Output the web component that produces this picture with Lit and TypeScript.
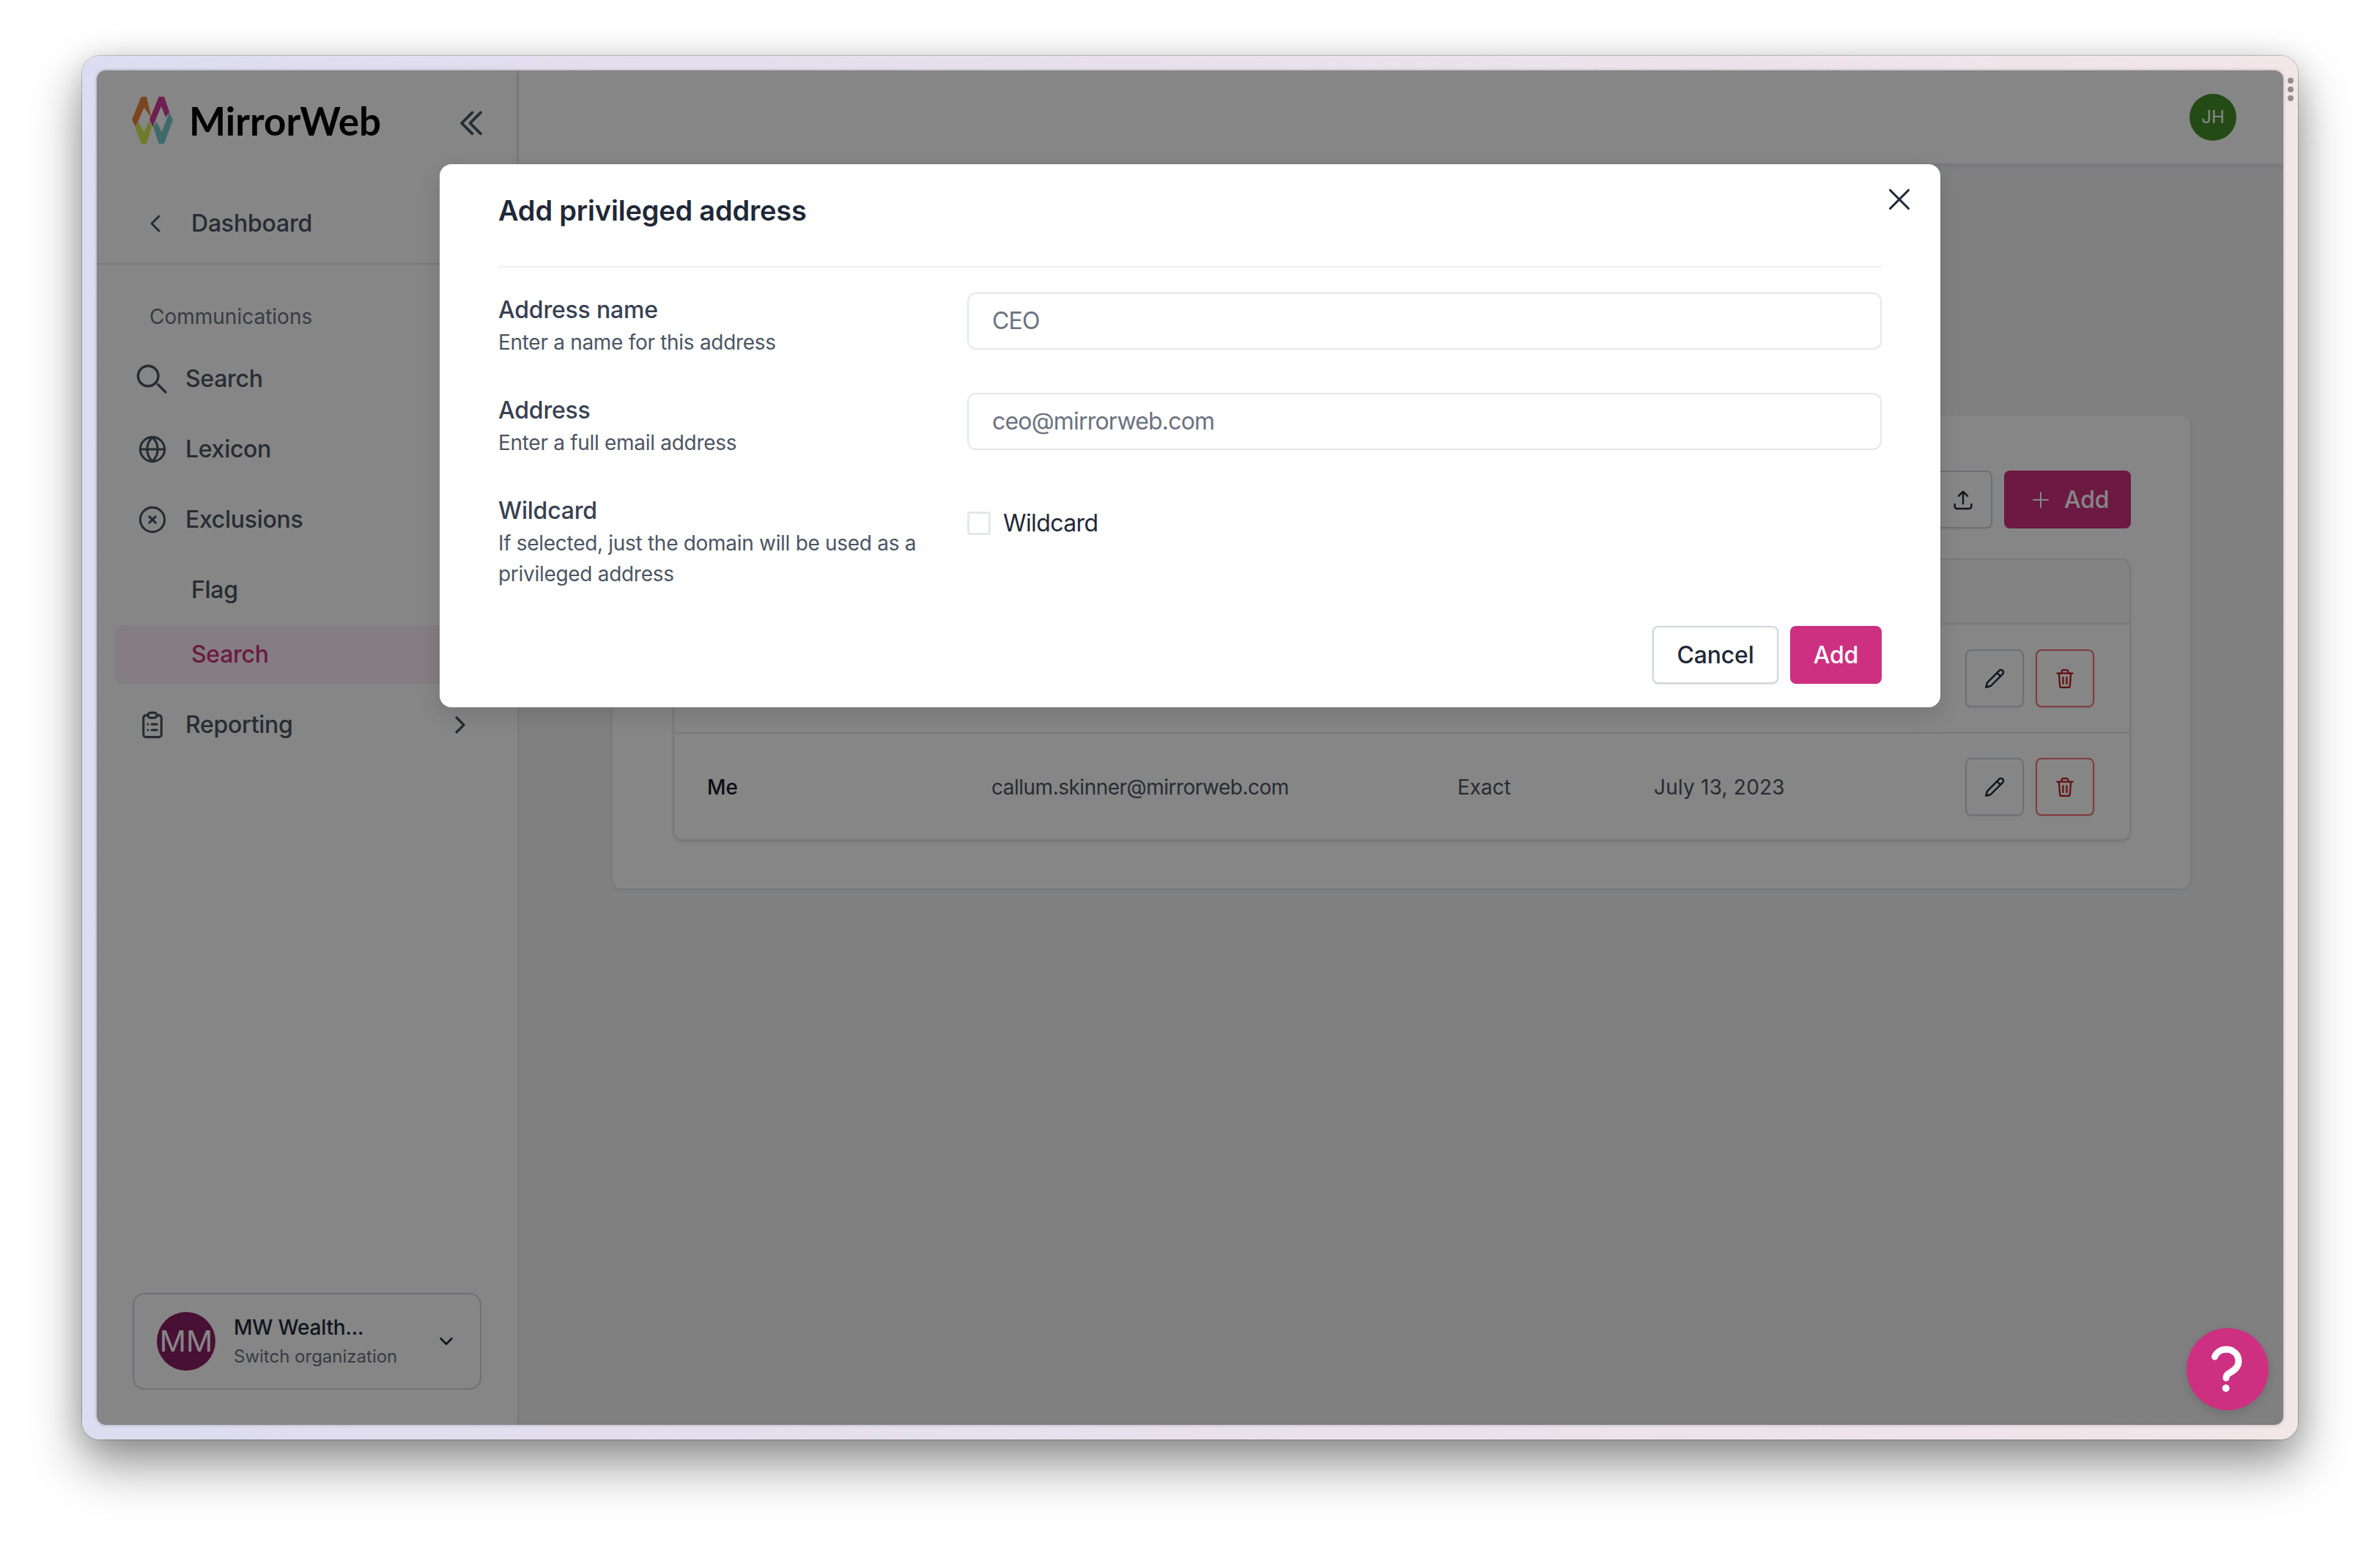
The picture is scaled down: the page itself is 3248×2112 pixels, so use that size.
import { LitElement, html, css, svg } from "lit";
import { customElement } from "lit/decorators.js";

const stroke = (w: number, s: number, body: unknown, sw = 1.5) => html`<svg
  width=${s} height=${s} viewBox="0 0 ${w} ${w}" fill="none" stroke="currentColor" stroke-width=${sw}
  stroke-linecap="round" stroke-linejoin="round">${body}</svg>`;

const icons = {
  dbl: svg`<path d="M18.75 19.5 11.25 12l7.5-7.5M12.75 19.5 5.25 12l7.5-7.5"/>`,
  left: svg`<path d="M15.75 19.5 8.25 12l7.5-7.5"/>`,
  right: svg`<path d="m8.25 4.5 7.5 7.5-7.5 7.5"/>`,
  down: svg`<path d="m19.5 8.25-7.5 7.5-7.5-7.5"/>`,
  search: svg`<path d="m21 21-5.2-5.2M16 10a6.9 6.9 0 1 1-13.800 0 6.900 6.900 0 0 1 13.800 0Z"/>`,
  globe: svg`<circle cx="12" cy="12" r="9.500"/><path d="M2.500 12h19M12 2.500c-5.500 5.500-5.500 13.500 0 19M12 2.500c5.500 5.500 5.500 13.500 0 19"/>`,
  xc: svg`<circle cx="12" cy="12" r="9.500"/><path d="m9.600 9.600 4.800 4.800M14.400 9.600l-4.800 4.800"/>`,
  clip: svg`<path d="M8.500 4.500H7a2 2 0 0 0-2 2V19.500a2 2 0 0 0 2 2h10a2 2 0 0 0 2-2V6.500a2 2 0 0 0-2-2h-1.500"/><rect x="8.500" y="2.500" width="7" height="4" rx="2"/><path d="M8.500 11.500h.01M11.500 11.500h4M8.500 16h.01M11.500 16h4"/>`,
  x: svg`<path d="M6 18 18 6M6 6l12 12"/>`,
  plus: svg`<path d="M12 4.500v15M4.500 12h15"/>`,
  upload: svg`<path d="M3.500 16.500v2.250A2.250 2.250 0 0 0 5.750 21h12.500a2.250 2.250 0 0 0 2.250-2.250V16.500M12 16V3.500m0 0L7.500 8M12 3.500 16.500 8"/>`,
  pencil: svg`<path d="M16.800 3.700a2.300 2.300 0 0 1 3.500 3.500L8 19.500l-4.800 1.300L4.500 16 16.800 3.700ZM14.500 6l3.500 3.500"/>`,
  trash: svg`<path d="M3.500 6h17M8.500 6V4a1.500 1.500 0 0 1 1.500-1.500h4A1.500 1.500 0 0 1 15.500 4v2M5.500 6l1 13.500A2 2 0 0 0 8.500 21.500h7a2 2 0 0 0 2-2l1-13.500M10 10.500v7M14 10.500v7"/>`,
};

@customElement("app-root")
export class AppRoot extends LitElement {
  static styles = css`
    :host { display: block; width: 3248px; height: 2112px; background: #fff; overflow: hidden;
      font-family: Inter, "Liberation Sans", sans-serif; color: #374151; }
    * { box-sizing: border-box; }
    svg { display: block; flex: none; }
    .stage { padding: 76px 112px 0; }
    .frame { position: relative; height: 1888px; padding: 20px; border-radius: 24px;
      background: linear-gradient(90deg, #dddcf0, #e8e1ec 50%, #f1e6e8);
      box-shadow: 0 0 0 1px rgba(0,0,0,.2), 0 34px 70px rgba(0,0,0,.42), 0 6px 40px rgba(0,0,0,.14); }
    .dots { position: absolute; right: 6px; top: 30px; display: flex; flex-direction: column; gap: 4px; }
    .dots i { width: 8px; height: 8px; border-radius: 50%; background: #968a8c; }
    .inner { position: relative; display: flex; height: 1848px; border-radius: 12px; overflow: hidden;
      background: #f3f4f6; box-shadow: 0 0 4px rgba(0,0,0,.25); }

    .sidebar { width: 576px; flex: none; display: flex; flex-direction: column; background: #fff;
      border-right: 2px solid #e5e7eb; }
    .brand { height: 170px; padding: 36px 40px 0 48px; display: flex; align-items: flex-start; }
    .wordmark { margin: -2px 0 0 22px; font: 700 53px/70px Lato, sans-serif; color: #000; }
    .collapse { margin: 13px 0 0 auto; color: #4b5563; }
    .back { display: flex; align-items: center; height: 95px; padding: 0 0 15px 64px; gap: 33px;
      border-bottom: 2px solid #e5e7eb; font: 500 32px/40px Inter, sans-serif; color: #4b5563; margin-bottom: 54px;
      letter-spacing: -.2px; }
    .section { margin: 0 0 28px 72px; font: 400 28px/34px Inter, sans-serif; color: #6b7280; }
    nav { display: flex; flex-direction: column; gap: 16px; margin: 0 24px; }
    .item { display: flex; align-items: center; height: 80px; padding-left: 32px; border-radius: 12px;
      font: 500 32px/40px Inter, sans-serif; color: #4b5563; letter-spacing: -.3px; }
    .item .ic { width: 40px; height: 48px; display: flex; justify-content: center; align-items: center; margin-right: 25px; }
    .item.sub { padding-left: 105px; }
    .subs { display: flex; flex-direction: column; gap: 8px; }
    .item.active { background: #fbeef5; color: #cd3080; }
    .item .end { margin-left: auto; margin-right: 38px; }
    .org { margin: auto 49px 48px; height: 132px; border: 2px solid #d1d5db; border-radius: 16px; display: flex;
      align-items: center; padding: 0 34px 0 31px; }
    .orgav { width: 80px; height: 80px; border-radius: 50%; background: #8a1f66; color: #fff; display: flex;
      align-items: center; justify-content: center; font: 400 40px/1 Inter, sans-serif; flex: none; }
    .orgtx { margin-left: 25px; flex: 1; }
    .orgname { font: 500 28px/40px Inter, sans-serif; color: #1f2937; letter-spacing: -.2px; }
    .orgsub { font: 400 24px/36px Inter, sans-serif; color: #6b7280; margin-top: 2px; }
    .org svg { color: #1f2937; }

    .main { flex: 1; display: flex; flex-direction: column; min-width: 0; }
    .top { height: 127px; flex: none; display: flex; align-items: center; justify-content: flex-end;
      padding-right: 64px; background: #fff; box-shadow: 0 2px 10px rgba(0,0,0,.1); }
    .jh { width: 64px; height: 64px; border-radius: 50%; background: #458f28; color: #fff; display: flex;
      align-items: center; justify-content: center; font: 400 24px/1 Inter, sans-serif; }
    .body { padding: 344px 127px 0 128px; }
    .card { background: #fff; border-radius: 12px; height: 645px; padding: 75px 81px 0 82px;
      box-shadow: 0 2px 6px rgba(0,0,0,.1); }
    .tools { display: flex; justify-content: flex-end; gap: 16px; margin-bottom: 41px; }
    .iconbtn { width: 80px; height: 79px; border: 2px solid #d1d5db; border-radius: 8px; background: #fff;
      display: flex; align-items: center; justify-content: center; color: #1f2937;
      box-shadow: 0 1px 2px rgba(0,0,0,.08); }
    .iconbtn.del { border-color: #f87171; color: #b91c1c; }
    .addbtn { width: 173px; height: 79px; border-radius: 8px; background: #cd3080; color: #fff; display: flex;
      align-items: center; gap: 16px; padding-left: 34px; font: 500 32px/40px Inter, sans-serif; letter-spacing: -.2px; }
    .table { height: 385px; border: 2px solid #e5e7eb; border-radius: 12px; box-shadow: 0 2px 3px rgba(0,0,0,.1); }
    .thead { height: 88px; background: #f9fafb; border-bottom: 2px solid #e5e7eb; border-radius: 10px 10px 0 0; }
    .row { height: 147px; display: grid; grid-template-columns: 388px 636px 268px 1fr auto; align-items: center;
      padding: 0 48px 0 45px; font: 400 28px/40px Inter, sans-serif; color: #4b5563; }
    .row + .row { border-top: 2px solid #e5e7eb; }
    .row .name { font-weight: 500; color: #111827; }
    .row .mail { letter-spacing: -.5px; }
    .row .date { letter-spacing: .2px; }
    .row .acts { grid-column: 5; display: flex; gap: 16px; }

    .overlay { position: absolute; inset: 0; background: rgba(0,0,0,.475); display: flex; justify-content: center;
      align-items: flex-start; padding-top: 128px; }
    .modal { position: relative; width: 2048px; height: 741px; background: #fff; border-radius: 16px;
      padding: 0 80px; box-shadow: 0 10px 30px rgba(0,0,0,.12); }
    .mhead { height: 141px; padding-top: 35px; border-bottom: 2px solid #f0f1f3; margin-bottom: 34px; }
    h2 { margin: 0; font: 600 38px/56px Inter, sans-serif; color: #1f2937; letter-spacing: -.2px; }
    .close { position: absolute; left: 1967px; top: 23px; color: #1f2937; }
    .form { display: flex; flex-direction: column; gap: 48px; }
    .frow { display: grid; grid-template-columns: 640px 1fr; }
    .lbl { font: 500 32px/47px Inter, sans-serif; color: #374151; letter-spacing: -.2px; }
    .desc { font: 400 28px/42px Inter, sans-serif; color: #4b5563; letter-spacing: -.3px; }
    .desc.w { width: 590px; }
    .input { height: 78px; border: 2px solid #e5e7eb; border-radius: 12px; padding-left: 32px; display: flex;
      align-items: center; font: 400 32px/40px Inter, sans-serif; color: #6b7280; letter-spacing: -.8px; }
    .check { display: flex; align-items: center; gap: 17px; height: 32px; margin-top: 25px;
      font: 400 32px/40px Inter, sans-serif; color: #1f2937; letter-spacing: -.6px; }
    .box { width: 32px; height: 32px; border: 3px solid #e5e7eb; border-radius: 4px; background: #fff; }
    .foot { display: flex; justify-content: flex-end; gap: 16px; margin-top: 50px; }
    .btn { height: 79px; border-radius: 8px; display: flex; align-items: center; justify-content: center;
      font: 500 32px/40px Inter, sans-serif; letter-spacing: -.2px; }
    .cancel { width: 172px; border: 2px solid #d1d5db; background: #fff; color: #1f2937; box-shadow: 0 1px 3px rgba(0,0,0,.1); }
    .primary { width: 125px; background: #cd3080; color: #fff; }
    .help { position: absolute; right: 20px; bottom: 20px; width: 112px; height: 112px; border-radius: 50%;
      background: #cd3080; box-shadow: 0 4px 14px rgba(0,0,0,.14); }
  `;

  private logo() {
    return html`<svg width="56" height="64" viewBox="0 0 56 64">
      <polygon fill="#eb833d" points="12.700,0 20,0 26.500,29 16.700,14.700 5,41.300 0,31.300"/>
      <polygon fill="#d33d98" points="36.700,0 44,0 51.300,21 46,28 40,13 28.300,41.300 24,31.300"/>
      <polygon fill="#d3e852" points="8.300,33.700 16.700,48 23.300,33.700 27.300,41.300 20,64 12.700,64 5,43"/>
      <polygon fill="#78cace" points="33.300,33.700 40.700,48 51,21.300 56,31.300 44,64 36.700,64 29.300,41.300"/>
    </svg>`;
  }

  private item(label: string, icon: unknown, end = false) {
    return html`<div class="item"><span class="ic">${icon}</span>${label}
      ${end ? html`<span class="end">${stroke(24, 32, icons.right, 2.4)}</span>` : null}</div>`;
  }

  private actions() {
    return html`<div class="acts">
      <div class="iconbtn">${stroke(24, 32, icons.pencil, 1.8)}</div>
      <div class="iconbtn del">${stroke(24, 30, icons.trash, 1.8)}</div>
    </div>`;
  }

  render() {
    return html`<div class="stage"><div class="frame">
      <div class="dots"><i></i><i></i><i></i></div>
      <div class="inner">
        <aside class="sidebar">
          <div class="brand">
            ${this.logo()}
            <p class="wordmark">MirrorWeb</p>
            <span class="collapse">${stroke(24, 46, icons.dbl, 2)}</span>
          </div>
          <div class="back">${stroke(24, 32, icons.left, 2.2)}Dashboard</div>
          <div class="section">Communications</div>
          <nav>
            ${this.item("Search", stroke(24, 48, icons.search, 1.7))}
            ${this.item("Lexicon", stroke(24, 42, icons.globe, 1.8))}
            ${this.item("Exclusions", stroke(24, 42, icons.xc, 1.8))}
            <div class="subs">
              <div class="item sub">Flag</div>
              <div class="item sub active">Search</div>
            </div>
            ${this.item("Reporting", stroke(24, 42, icons.clip, 1.8), true)}
          </nav>
          <div class="org">
            <div class="orgav">MM</div>
            <div class="orgtx">
              <div class="orgname">MW Wealth...</div>
              <div class="orgsub">Switch organization</div>
            </div>
            ${stroke(24, 24, icons.down, 2.6)}
          </div>
        </aside>
        <div class="main">
          <header class="top"><div class="jh">JH</div></header>
          <div class="body">
            <section class="card">
              <div class="tools">
                <div class="iconbtn">${stroke(24, 32, icons.upload, 1.8)}</div>
                <div class="addbtn">${stroke(24, 32, icons.plus, 1.5)}Add</div>
              </div>
              <div class="table">
                <div class="thead"></div>
                <div class="row">${this.actions()}</div>
                <div class="row">
                  <span class="name">Me</span><span class="mail">callum.skinner@mirrorweb.com</span><span>Exact</span><span class="date">July 13, 2023</span>
                  ${this.actions()}
                </div>
              </div>
            </section>
          </div>
        </div>
        <div class="overlay">
          <div class="modal">
            <div class="mhead"><h2>Add privileged address</h2></div>
            <span class="close">${stroke(24, 50, icons.x, 1.5)}</span>
            <div class="form">
              <div class="frow">
                <div><div class="lbl">Address name</div><div class="desc">Enter a name for this address</div></div>
                <div class="input">CEO</div>
              </div>
              <div class="frow">
                <div><div class="lbl">Address</div><div class="desc">Enter a full email address</div></div>
                <div class="input">ceo@mirrorweb.com</div>
              </div>
              <div class="frow">
                <div><div class="lbl">Wildcard</div><div class="desc w">If selected, just the domain will be used as a privileged address</div></div>
                <div class="check"><span class="box"></span>Wildcard</div>
              </div>
            </div>
            <div class="foot">
              <div class="btn cancel">Cancel</div>
              <div class="btn primary">Add</div>
            </div>
          </div>
        </div>
        <div class="help">
          <svg width="112" height="112" viewBox="0 0 112 112" fill="none" stroke="#fff" stroke-width="9" stroke-linecap="round">
            <path d="M38.500 39C41 33 47 29 54 29C64 29 71 36 71 45C71 54 64 58 59 61C56 62.500 54 64 54 68"/>
            <circle cx="53.700" cy="82" r="5" fill="#fff" stroke="none"/>
          </svg>
        </div>
      </div>
    </div></div>`;
  }
}
